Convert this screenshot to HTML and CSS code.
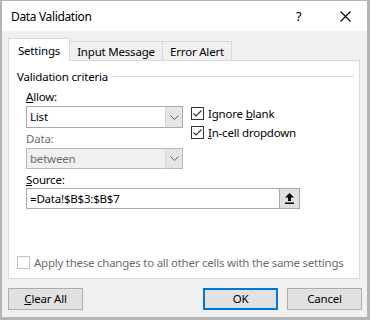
FILE: index.html
```html
<!DOCTYPE html>
<html>
<head>
<meta charset="utf-8">
<link rel="stylesheet" href="styles.css">
</head>
<body>
<div class="window">
  <div class="titlebar">
    <span class="title">Data Validation</span>
    <span class="help">?</span>
    <span class="close"><svg width="11" height="11" viewBox="0 0 11 11"><path d="M0.5 0.5 L10.5 10.5 M10.5 0.5 L0.5 10.5" stroke="#000" stroke-width="1.1" fill="none"/></svg></span>
  </div>
  <div class="content">
    <div class="tabs">
      <div class="tab active">Settings</div>
      <div class="tab msg">Input Message</div>
      <div class="tab err">Error Alert</div>
    </div>
    <div class="panel">
      <div class="group-head"><span>Validation criteria</span><span class="rule"></span></div>
      <div class="criteria">
        <div class="col-left">
          <div class="label"><u>A</u>llow:</div>
          <div class="combo">
            <span class="val">List</span>
            <span class="dd"><svg width="9" height="5" viewBox="0 0 9 5"><path d="M0.5 0.5 L4.5 4.5 L8.5 0.5" stroke="#606060" stroke-width="1" fill="none"/></svg></span>
          </div>
          <div class="label dis gap2">Data:</div>
          <div class="combo disabled">
            <span class="val">between</span>
            <span class="dd"><svg width="9" height="5" viewBox="0 0 9 5"><path d="M0.5 0.5 L4.5 4.5 L8.5 0.5" stroke="#606060" stroke-width="1" fill="none"/></svg></span>
          </div>
        </div>
        <div class="col-right">
          <div class="check"><span class="box"><svg width="11" height="11" viewBox="0 0 11 11"><path d="M1.5 5.5 L4 8 L9.5 2.5" stroke="#333" stroke-width="1.2" fill="none"/></svg></span><span>Ignore <u>b</u>lank</span></div>
          <div class="check"><span class="box"><svg width="11" height="11" viewBox="0 0 11 11"><path d="M1.5 5.5 L4 8 L9.5 2.5" stroke="#333" stroke-width="1.2" fill="none"/></svg></span><span><u>I</u>n-cell dropdown</span></div>
        </div>
      </div>
      <div class="label src-label"><u>S</u>ource:</div>
      <div class="source">
        <span class="val">=Data!$B$3:$B$7</span>
        <span class="up"><svg width="9" height="11" viewBox="0 0 9 11"><path d="M4.5 0 L9 4.5 L6 4.5 L6 8 L3 8 L3 4.5 L0 4.5 Z" fill="#000"/><rect x="0" y="9.5" width="9" height="1.5" fill="#000"/></svg></span>
      </div>
      <div class="check apply"><span class="box"></span><span>Apply these changes to all other cells with the same settings</span></div>
    </div>
    <div class="buttons">
      <div class="btn"><u>C</u>lear All</div>
      <div class="grow"></div>
      <div class="btn default">OK</div>
      <div class="btn">Cancel</div>
    </div>
  </div>
</div>
</body>
</html>
```
FILE: styles.css
```css
* { box-sizing: border-box; }
html, body { margin: 0; padding: 0; }
body {
  width: 370px;
  height: 320px;
  font-family: "Noto Sans", "Liberation Sans", sans-serif;
  font-size: 11.5px;
  letter-spacing: -0.2px;
  color: #000;
  overflow: hidden;
}
.window {
  width: 370px;
  height: 320px;
  border-style: solid;
  border-color: #b4b4b4;
  border-width: 1px 3px 3px 2px;
  background: #f0f0f0;
  display: flex;
  flex-direction: column;
}
.titlebar {
  height: 30px;
  background: #fff;
  display: flex;
  align-items: center;
  padding-left: 9px;
  flex-shrink: 0;
}
.title { flex: 1; font-size: 12px; letter-spacing: -0.35px; }
.help { width: 8px; margin-right: 36px; font-size: 13px; }
.close { width: 11px; height: 11px; margin-right: 16px; display: flex; }
.content {
  flex: 1;
  display: flex;
  flex-direction: column;
  padding: 7px 0 0 6px;
}
.tabs {
  display: flex;
  height: 23px;
  margin-bottom: -1px;
  position: relative;
  z-index: 1;
}
.tab {
  border: 1px solid #d9d9d9;
  border-bottom: none;
  text-align: center;
  white-space: nowrap;
}
.tab.active {
  width: 62px;
  height: 23px;
  background: #fff;
  line-height: 24px;
}
.tab.msg, .tab.err {
  margin-top: 3px;
  height: 19px;
  line-height: 19px;
  margin-left: -1px;
  position: relative;
  z-index: -1;
}
.tab.msg { width: 94px; }
.tab.err { width: 70px; }
.panel {
  width: 352px;
  height: 219px;
  background: #fff;
  border: 1px solid #d9d9d9;
  padding: 7px 5px 6px 8px;
  display: flex;
  flex-direction: column;
}
.group-head {
  display: flex;
  align-items: center;
  height: 16px;
}
.rule { flex: 1; height: 1px; background: #dcdcdc; margin-left: 5px; }
.criteria {
  display: flex;
  margin: 4px 0 0 9px;
}
.col-left { width: 157px; display: flex; flex-direction: column; }
.label { height: 17px; line-height: 17px; }
.label.dis { color: #6d6d6d; }
.gap2 { margin-top: 2px; }
.combo {
  height: 22px;
  border: 1px solid #a9a9a9;
  display: flex;
  margin-top: 1px;
  background: #fff;
}
.combo .val { flex: 1; padding-left: 3px; line-height: 20px; }
.combo .dd {
  width: 18px;
  background: #e5e5e5;
  border: 1px solid #a9a9a9;
  border-left-color: #d3d3d3;
  margin: -1px -1px -1px 0;
  display: flex;
  align-items: center;
  justify-content: center;
}
.combo.disabled { height: 21px; background: #f0f0f0; border-color: #b8b8b8; }
.combo.disabled .val { color: #6d6d6d; line-height: 19px; }
.combo.disabled .dd { border-color: #b8b8b8; border-left-color: #dadada; }
.col-right { margin-left: 8px; padding-top: 16px; display: flex; flex-direction: column; }
.check { display: flex; align-items: center; height: 19px; white-space: nowrap; }
.box {
  flex-shrink: 0;
  width: 13px;
  height: 13px;
  border: 1px solid #333;
  background: #fff;
  margin-right: 4px;
  display: flex;
  align-items: center;
  justify-content: center;
}
.src-label { margin: 2px 0 0 9px; }
.source {
  margin: 0 0 0 9px;
  width: 274px;
  height: 21px;
  border: 1px solid #a9a9a9;
  display: flex;
}
.source .val { flex: 1; padding-left: 3px; line-height: 19px; }
.source .up {
  width: 21px;
  background: #e1e1e1;
  border: 1px solid #a9a9a9;
  margin: -1px -1px -1px 0;
  display: flex;
  align-items: center;
  justify-content: center;
}
.apply { margin-top: auto; color: #6d6d6d; letter-spacing: -0.25px; }
.apply .box { border-color: #c4c4c4; }
.buttons {
  display: flex;
  margin-top: 9px;
  padding-right: 5px;
}
.grow { flex: 1; }
.btn {
  width: 75px;
  height: 22px;
  background: #e1e1e1;
  border: 1px solid #adadad;
  text-align: center;
  line-height: 20px;
}
.btn.default { border: 2px solid #0078d7; line-height: 18px; margin-right: 9px; }
```
